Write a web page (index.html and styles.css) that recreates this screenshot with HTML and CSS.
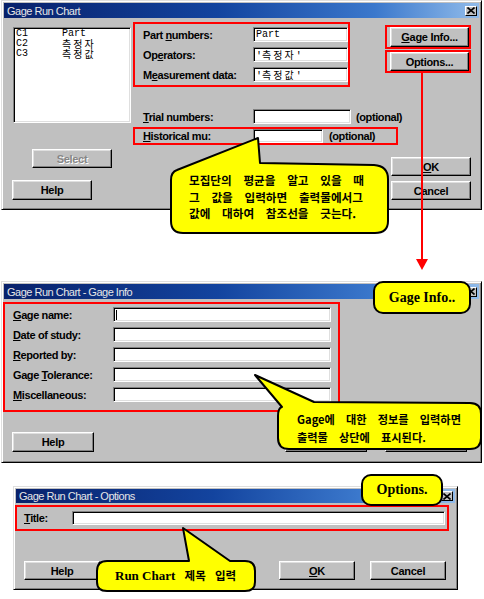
FILE: index.html
```html
<!DOCTYPE html>
<html lang="ko">
<head>
<meta charset="utf-8">
<title>Gage Run Chart</title>
<link rel="stylesheet" href="styles.css">
</head>
<body>
<div class="page">

  <section class="dlg d1">
    <div class="titlebar"><span>Gage Run Chart</span><span class="close"><svg width="8" height="7" viewBox="0 0 8 7"><path d="M0.5 0.5 L7.5 6.5 M7.5 0.5 L0.5 6.5" stroke="#000" stroke-width="1.6" fill="none"/></svg></span></div>
    <div class="d1-top">
      <div class="listbox">
        <div class="lrow"><span class="lc">C1</span><span>Part</span></div>
        <div class="lrow"><span class="lc">C2</span><span class="ko">측정자</span></div>
        <div class="lrow"><span class="lc">C3</span><span class="ko">측정값</span></div>
      </div>
      <div class="mid">
        <div class="hl fields">
          <div class="frow"><span class="lbl">Part <u>n</u>umbers:</span><span class="inp w95 mono">Part</span></div>
          <div class="frow"><span class="lbl">Op<u>e</u>rators:</span><span class="inp w95 mono">'<span class="ko">측정자</span>'</span></div>
          <div class="frow"><span class="lbl">M<u>e</u>asurement data:</span><span class="inp w95 mono">'<span class="ko">측정값</span>'</span></div>
        </div>
        <div class="frow trial"><span class="lbl"><u>T</u>rial numbers:</span><span class="inp w98"></span><span class="opt">(optional)</span></div>
        <div class="hl hist"><span class="lbl"><u>H</u>istorical mu:</span><span class="inp w70 h14"></span><span class="opt">(optional)</span></div>
      </div>
      <div class="side">
        <div class="hl sbox sbox1"><span class="btn b-side h20"><u>G</u>age Info...</span></div>
        <div class="hl sbox sbox2"><span class="btn b-side h19">Options...</span></div>
      </div>
    </div>
    <div class="d1-bot">
      <div class="bcol">
        <span class="btn disabled b-select">Select</span>
        <span class="btn b-help1">Help</span>
      </div>
      <div class="bcol">
        <span class="btn b-ok1"><u>O</u>K</span>
        <span class="btn b-cancel1">Cancel</span>
      </div>
    </div>
  </section>

  <section class="dlg d2">
    <div class="titlebar"><span>Gage Run Chart - Gage Info</span><span class="close"><svg width="8" height="7" viewBox="0 0 8 7"><path d="M0.5 0.5 L7.5 6.5 M7.5 0.5 L0.5 6.5" stroke="#000" stroke-width="1.6" fill="none"/></svg></span></div>
    <div class="hl info">
      <div class="irow"><span class="lbl"><u>G</u>age name:</span><span class="inp w218"><i class="caret"></i></span></div>
      <div class="irow"><span class="lbl"><u>D</u>ate of study:</span><span class="inp w218"></span></div>
      <div class="irow"><span class="lbl"><u>R</u>eported by:</span><span class="inp w218"></span></div>
      <div class="irow"><span class="lbl">Gage <u>T</u>olerance:</span><span class="inp w218"></span></div>
      <div class="irow"><span class="lbl"><u>M</u>iscellaneous:</span><span class="inp w218"></span></div>
    </div>
    <div class="brow2">
      <span class="btn b2">Help</span>
      <span class="btn b2 ok2" aria-label="OK"></span>
      <span class="btn b2 cancel2" aria-label="Cancel"></span>
    </div>
  </section>

  <section class="dlg d3">
    <div class="titlebar t14"><span>Gage Run Chart - Options</span><span class="close"><svg width="8" height="7" viewBox="0 0 8 7"><path d="M0.5 0.5 L7.5 6.5 M7.5 0.5 L0.5 6.5" stroke="#000" stroke-width="1.6" fill="none"/></svg></span></div>
    <div class="hl titlebox"><span class="lbl tl"><u>T</u>itle:</span><span class="inp w373 h14"></span></div>
    <div class="brow3">
      <span class="btn b3">Help</span>
      <span class="btn b3 ok3"><u>O</u>K</span>
      <span class="btn b3 cancel3">Cancel</span>
    </div>
  </section>

  <svg class="arrow" width="16" height="200" viewBox="0 0 16 200"><line x1="8" y1="1" x2="8" y2="188" stroke="#f00" stroke-width="2"/><path d="M2 187 L14 187 L8 198 Z" fill="#f00"/></svg>

  <div class="callout c1">
    <svg class="shape" width="222" height="100" viewBox="0 0 222 100"><path d="M90 2 L92 27 L206 29 Q220 30 220 43 L220 85 Q220 97 207 97 L15 97 Q3 97 3 85 L3 44 Q3 36 9 34 Z" fill="#ffff00" stroke="#000" stroke-width="2" stroke-linejoin="round"/></svg>
    <p class="ctext t1">모집단의 평균을 알고 있을 때<br>그 값을 입력하면 출력물에서그<br>값에 대하여 참조선을 긋는다.</p>
  </div>

  <div class="callout c2">
    <svg class="shape" width="232" height="80" viewBox="0 0 232 80"><path d="M3 3 L62 30 L218 31 Q229 31 229 42 L229 66 Q229 77 218 77 L37 77 Q26 77 26 66 L26 44 Q26 36 30 35 Z" fill="#ffff00" stroke="#000" stroke-width="2" stroke-linejoin="round"/></svg>
    <p class="ctext t2">Gage에 대한 정보를 입력하면<br>출력물 상단에 표시된다.</p>
  </div>

  <div class="callout c3">
    <svg class="shape" width="162" height="68" viewBox="0 0 162 68"><path d="M88 2 L135 35 L150 35 Q160 35 160 45 L160 56 Q160 65 150 65 L12 65 Q2 65 2 56 L2 45 Q2 35 12 35 L94 35 Z" fill="#ffff00" stroke="#000" stroke-width="2" stroke-linejoin="round"/></svg>
    <p class="ctext t3"><span class="serif">Run Chart</span> 제목 입력</p>
  </div>

  <div class="tag tag1">Gage Info..</div>
  <div class="tag tag2">Options.</div>

</div>
</body>
</html>
```

FILE: styles.css
```css
* { box-sizing: border-box; margin: 0; padding: 0; }

body {
  background: #fff;
  font-family: "Liberation Sans", Arial, sans-serif;
  font-size: 11px;
  color: #000;
  overflow: hidden;
}

.page {
  position: relative;
  width: 484px;
  height: 599px;
}

/* ---------- window chrome ---------- */
.dlg {
  background: #c0c0c0;
  border: 1px solid;
  border-color: #dfdfdf #000 #000 #dfdfdf;
  box-shadow: inset 1px 1px #fff, inset -1px -1px #808080;
  padding: 2px;
  display: flex;
  flex-direction: column;
}
.d1 { margin: 0 0 0 1px; width: 481px; height: 210px; }
.d2 { margin: 71px 0 0 1px; width: 481px; height: 182px; }
.d3 { margin: 23px 0 0 13px; width: 445px; height: 104px; }

.titlebar {
  flex: none;
  height: 15px;
  display: flex;
  align-items: center;
  justify-content: space-between;
  padding: 0 2px 0 3px;
  background: linear-gradient(90deg, #08216b 0%, #13449f 45%, #3b78cc 78%, #90bbea 100%);
  color: #e6e6e6;
  font-size: 11px;
  letter-spacing: -0.5px;
  white-space: nowrap;
}
.titlebar.t14 { height: 14px; }

.close {
  width: 12px;
  height: 10px;
  display: flex;
  align-items: center;
  justify-content: center;
  background: #c0c0c0;
  border: 1px solid;
  border-color: #fff #000 #000 #fff;
}

/* ---------- controls ---------- */
.hl { border: 2px solid #f00; }

.lbl {
  flex: none;
  font-weight: bold;
  letter-spacing: -0.4px;
  white-space: nowrap;
}

.inp {
  display: block;
  flex: none;
  height: 15px;
  background: #fff;
  border: 1px solid;
  border-color: #808080 #fff #fff #808080;
  box-shadow: inset 1px 1px #000, inset -1px -1px #dfdfdf;
  padding: 0 0 0 2px;
  line-height: 13px;
  position: relative;
}
.h14 { height: 14px; }
.w95 { width: 95px; }
.w98 { width: 98px; }
.w70 { width: 70px; }
.w218 { width: 218px; }
.w373 { width: 373px; }

.mono {
  font-family: "Liberation Mono", "Courier New", monospace;
  font-size: 10px;
}
.ko {
  font-family: "Noto Sans CJK KR", sans-serif;
  font-size: 10px;
  letter-spacing: 2px;
}

.btn {
  display: flex;
  align-items: center;
  justify-content: center;
  flex: none;
  background: #c0c0c0;
  border: 1px solid;
  border-color: #fff #000 #000 #fff;
  box-shadow: inset -1px -1px #808080, inset 1px 1px #dfdfdf;
  font-weight: bold;
  letter-spacing: -0.3px;
  white-space: nowrap;
}
.btn.disabled {
  color: #868686;
  text-shadow: 1px 1px #fff;
}

.opt {
  flex: none;
  font-weight: bold;
  letter-spacing: -0.4px;
  white-space: nowrap;
}

/* ---------- dialog 1 ---------- */
.d1-top {
  display: flex;
  align-items: flex-start;
}
.listbox {
  flex: none;
  width: 118px;
  height: 96px;
  margin: 9px 0 0 9px;
  background: #fff;
  border: 1px solid;
  border-color: #808080 #fff #fff #808080;
  box-shadow: inset 1px 1px #000, inset -1px -1px #dfdfdf;
  padding: 1px 0 0 2px;
  font-family: "Liberation Mono", "Courier New", monospace;
  font-size: 10px;
}
.lrow {
  display: flex;
  height: 10px;
  line-height: 10px;
}
.lc { width: 46px; }

.mid {
  flex: none;
  width: 252px;
  margin: 4px 0 0 2px;
}
.fields {
  width: 217px;
  height: 65px;
  padding: 3px 0 0 8px;
  display: flex;
  flex-direction: column;
  gap: 5px;
}
.frow {
  display: flex;
  align-items: center;
  height: 15px;
}
.frow .lbl { width: 110px; }
.trial { margin-top: 22px; padding-left: 10px; }
.trial .opt { margin-left: 5px; }
.hist {
  width: 265px;
  height: 18px;
  margin-top: 3px;
  padding-left: 8px;
  display: flex;
  align-items: center;
}
.hist .lbl { width: 110px; }
.hist .opt { margin-left: 6px; }

.side {
  flex: none;
  width: 86px;
  margin-top: 7px;
}
.sbox { padding-left: 3px; }
.sbox1 { height: 24px; }
.sbox2 { height: 23px; margin-top: 1px; }
.b-side { width: 79px; }
.h20 { height: 20px; }
.h19 { height: 19px; }

.d1-bot {
  display: flex;
  justify-content: space-between;
  padding-right: 8px;
}
.bcol { display: flex; flex-direction: column; }
.b-select { width: 80px; height: 19px; margin: 4px 0 0 28px; }
.b-help1 { width: 80px; height: 20px; margin: 12px 0 0 8px; }
.b-ok1 { width: 80px; height: 19px; margin-top: 12px; }
.b-cancel1 { width: 80px; height: 19px; margin-top: 5px; }

/* ---------- dialog 2 ---------- */
.info {
  width: 337px;
  height: 110px;
  margin: 3px 0 0 -1px;
  padding: 3px 0 0 8px;
  display: flex;
  flex-direction: column;
  gap: 5px;
}
.irow {
  display: flex;
  align-items: center;
  height: 15px;
}
.irow .lbl { width: 100px; }
.caret {
  position: absolute;
  left: 2px;
  top: 2px;
  width: 1px;
  height: 10px;
  background: #000;
}
.brow2 {
  display: flex;
  margin-top: 20px;
}
.b2 { width: 82px; height: 20px; }
.brow2 .b2:first-child { margin-left: 8px; }
.ok2 { margin-left: 191px; }
.cancel2 { margin-left: 18px; }

/* ---------- dialog 3 ---------- */
.titlebox {
  width: 434px;
  height: 26px;
  margin: 2px 0 0 -1px;
  padding-left: 7px;
  display: flex;
  align-items: center;
}
.tl { width: 48px; }
.brow3 {
  display: flex;
  margin-top: 30px;
}
.b3 { width: 76px; height: 19px; }
.brow3 .b3:first-child { margin-left: 8px; }
.ok3 { margin-left: 179px; }
.cancel3 { margin-left: 15px; }

/* ---------- annotations (overlays) ---------- */
.arrow {
  position: absolute;
  left: 414px;
  top: 72px;
}

.callout { position: absolute; }
.callout .shape {
  position: absolute;
  left: 0;
  top: 0;
  overflow: visible;
}
.c1 { left: 168px; top: 136px; width: 222px; height: 100px; }
.c2 { left: 252px; top: 372px; width: 232px; height: 80px; }
.c3 { left: 95px; top: 526px; width: 162px; height: 68px; }

.ctext {
  position: relative;
  font-family: "Noto Sans CJK KR", "Liberation Sans", sans-serif;
  font-weight: bold;
  white-space: nowrap;
  color: #000;
}
.t1 {
  font-size: 11.6px;
  line-height: 16.5px;
  word-spacing: 8.5px;
  padding: 36px 0 0 21px;
}
.t2 {
  font-size: 11.2px;
  line-height: 18px;
  word-spacing: 8px;
  padding: 38px 0 0 45px;
}
.t3 {
  font-size: 11.5px;
  line-height: 18px;
  word-spacing: 6px;
  padding: 40px 0 0 20px;
}
.serif {
  font-family: "Liberation Serif", "Times New Roman", serif;
  font-size: 13px;
  word-spacing: 0;
}

.tag {
  position: absolute;
  display: flex;
  align-items: center;
  justify-content: center;
  background: #ffff00;
  border: 2px solid #000;
  border-radius: 10px;
  font-family: "Liberation Serif", "Times New Roman", serif;
  font-weight: bold;
  font-size: 14px;
  white-space: nowrap;
}
.tag1 { left: 373px; top: 281px; width: 98px; height: 33px; }
.tag2 { left: 361px; top: 474px; width: 82px; height: 32px; }
```
